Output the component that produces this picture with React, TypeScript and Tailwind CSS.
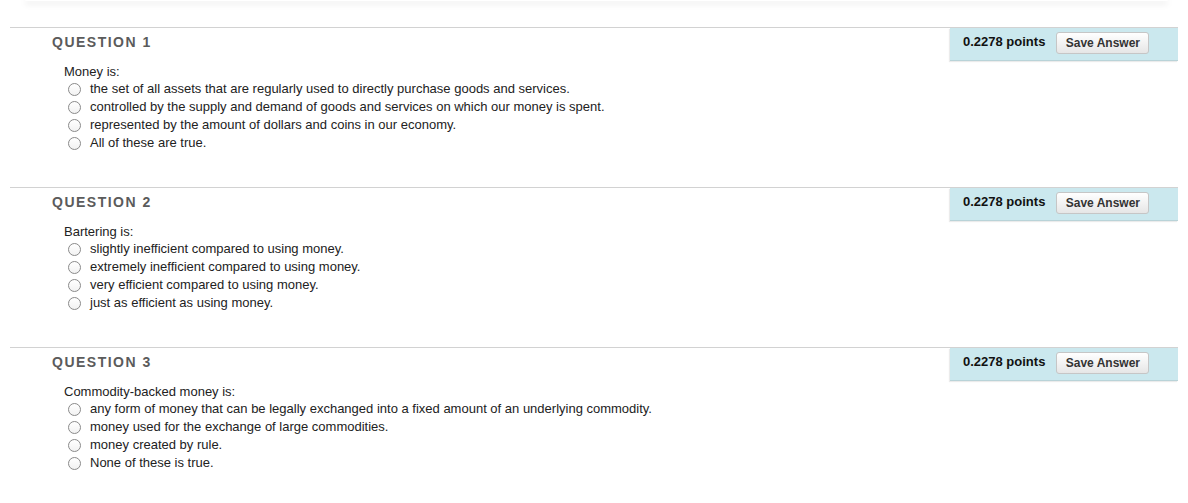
const questions = [
  {
    title: "QUESTION 1",
    prompt: "Money is:",
    options: [
      "the set of all assets that are regularly used to directly purchase goods and services.",
      "controlled by the supply and demand of goods and services on which our money is spent.",
      "represented by the amount of dollars and coins in our economy.",
      "All of these are true.",
    ],
  },
  {
    title: "QUESTION 2",
    prompt: "Bartering is:",
    options: [
      "slightly inefficient compared to using money.",
      "extremely inefficient compared to using money.",
      "very efficient compared to using money.",
      "just as efficient as using money.",
    ],
  },
  {
    title: "QUESTION 3",
    prompt: "Commodity-backed money is:",
    options: [
      "any form of money that can be legally exchanged into a fixed amount of an underlying commodity.",
      "money used for the exchange of large commodities.",
      "money created by rule.",
      "None of these is true.",
    ],
  },
];

function Question({ q, idx }: { q: (typeof questions)[number]; idx: number }) {
  return (
    <div className="h-[160px] border-t border-[#d2d2d2] flex">
      <div className="flex-1">
        <h3 className="pt-[4px] pl-[42px] text-[14px] leading-[20px] font-bold tracking-[1.5px] text-[#5b5b5b]">
          {q.title}
        </h3>
        <div className="mt-[12px] pl-[54px] text-[13px] text-[#222]">
          <p className="leading-[16px]">{q.prompt}</p>
          <ul>
            {q.options.map((opt, i) => (
              <li key={i} className="flex items-center h-[18px]">
                <label className="flex items-center">
                  <input type="radio" name={"q" + idx} className="sr-only" />
                  <span className="ml-[4px] w-[13px] h-[13px] rounded-full border border-[#8a8a8a] bg-gradient-to-b from-white to-[#f2f2f2]" />
                  <span className="ml-[9px]">{opt}</span>
                </label>
              </li>
            ))}
          </ul>
        </div>
      </div>
      <div className="w-[228px] h-[33px] flex items-start pt-[4px] pl-[13px] bg-[#cbe8ee] border-b border-[#b9d3d8] shadow-[-1px_1px_1px_rgba(0,0,0,0.08)]">
        <span className="text-[13px] leading-[20px] font-bold text-[#111]">0.2278 points</span>
        <button className="ml-[11px] h-[22px] w-[93px] rounded-[3px] border border-[#c6c6c6] bg-gradient-to-b from-white to-[#e6e6e6] text-[12px] font-bold text-[#333]">
          Save Answer
        </button>
      </div>
    </div>
  );
}

export default function App() {
  return (
    <div
      className="min-h-screen bg-white"
      style={{ fontFamily: '"Liberation Sans", Arial, sans-serif' }}
    >
      <div className="ml-[25px] mr-[20px] h-px bg-white rounded-b-md shadow-[0_2px_6px_rgba(0,0,0,0.28)]" />
      <div className="mt-[26px] px-[10px]">
        {questions.map((q, i) => (
          <Question key={i} q={q} idx={i} />
        ))}
      </div>
    </div>
  );
}
